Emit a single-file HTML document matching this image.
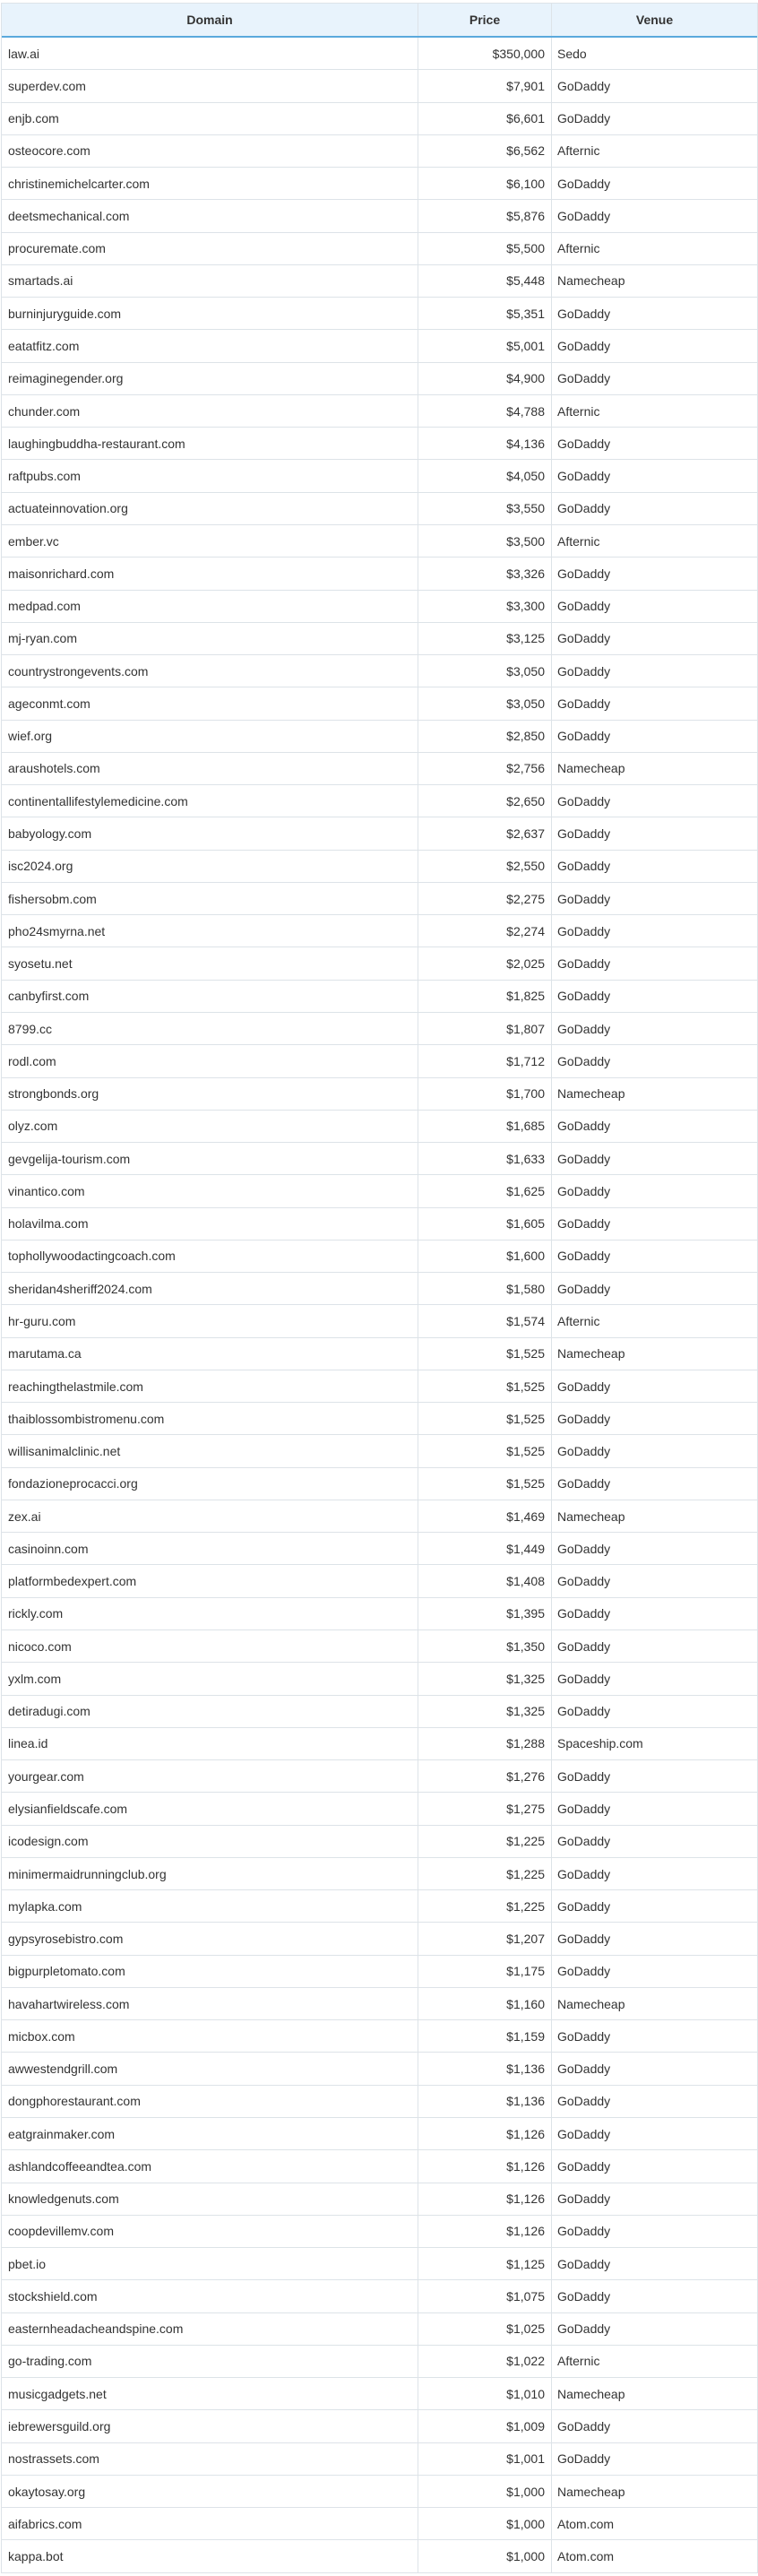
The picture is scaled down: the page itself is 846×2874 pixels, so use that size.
<!DOCTYPE html>
<html><head><meta charset="utf-8"><style>
html,body{margin:0;padding:0;background:#fff;width:846px;height:2874px;overflow:hidden}
.t{position:absolute;left:1px;top:3px;width:843px;border:1px solid #dde3e8;border-bottom:none;font-family:"Liberation Sans",sans-serif;font-size:14px;color:#333}
.h{display:flex;height:36px;background:#e8f3fc;border-bottom:2px solid #5aa9dd;font-weight:bold;color:#333}
.h div{display:flex;align-items:center;justify-content:center}
.r{display:flex;height:35.27px;border-bottom:1px solid #dde3e8}
.c1{width:465px;border-right:1px solid #dde3e8;display:flex;align-items:center;padding-left:7px;box-sizing:border-box}
.c2{width:149px;border-right:1px solid #dde3e8;display:flex;align-items:center;justify-content:flex-end;padding-right:7px;box-sizing:border-box}
.c3{flex:1;display:flex;align-items:center;padding-left:6px;box-sizing:border-box}
.h .c1,.h .c2{justify-content:center;padding:0}
.h .c3{justify-content:center;padding:0}
</style></head><body><div class="t">
<div class="h"><div class="c1">Domain</div><div class="c2">Price</div><div class="c3">Venue</div></div>
<div id="b"></div>
</div>
<script>
var d=`law.ai|$350,000|Sedo
superdev.com|$7,901|GoDaddy
enjb.com|$6,601|GoDaddy
osteocore.com|$6,562|Afternic
christinemichelcarter.com|$6,100|GoDaddy
deetsmechanical.com|$5,876|GoDaddy
procuremate.com|$5,500|Afternic
smartads.ai|$5,448|Namecheap
burninjuryguide.com|$5,351|GoDaddy
eatatfitz.com|$5,001|GoDaddy
reimaginegender.org|$4,900|GoDaddy
chunder.com|$4,788|Afternic
laughingbuddha-restaurant.com|$4,136|GoDaddy
raftpubs.com|$4,050|GoDaddy
actuateinnovation.org|$3,550|GoDaddy
ember.vc|$3,500|Afternic
maisonrichard.com|$3,326|GoDaddy
medpad.com|$3,300|GoDaddy
mj-ryan.com|$3,125|GoDaddy
countrystrongevents.com|$3,050|GoDaddy
ageconmt.com|$3,050|GoDaddy
wief.org|$2,850|GoDaddy
araushotels.com|$2,756|Namecheap
continentallifestylemedicine.com|$2,650|GoDaddy
babyology.com|$2,637|GoDaddy
isc2024.org|$2,550|GoDaddy
fishersobm.com|$2,275|GoDaddy
pho24smyrna.net|$2,274|GoDaddy
syosetu.net|$2,025|GoDaddy
canbyfirst.com|$1,825|GoDaddy
8799.cc|$1,807|GoDaddy
rodl.com|$1,712|GoDaddy
strongbonds.org|$1,700|Namecheap
olyz.com|$1,685|GoDaddy
gevgelija-tourism.com|$1,633|GoDaddy
vinantico.com|$1,625|GoDaddy
holavilma.com|$1,605|GoDaddy
tophollywoodactingcoach.com|$1,600|GoDaddy
sheridan4sheriff2024.com|$1,580|GoDaddy
hr-guru.com|$1,574|Afternic
marutama.ca|$1,525|Namecheap
reachingthelastmile.com|$1,525|GoDaddy
thaiblossombistromenu.com|$1,525|GoDaddy
willisanimalclinic.net|$1,525|GoDaddy
fondazioneprocacci.org|$1,525|GoDaddy
zex.ai|$1,469|Namecheap
casinoinn.com|$1,449|GoDaddy
platformbedexpert.com|$1,408|GoDaddy
rickly.com|$1,395|GoDaddy
nicoco.com|$1,350|GoDaddy
yxlm.com|$1,325|GoDaddy
detiradugi.com|$1,325|GoDaddy
linea.id|$1,288|Spaceship.com
yourgear.com|$1,276|GoDaddy
elysianfieldscafe.com|$1,275|GoDaddy
icodesign.com|$1,225|GoDaddy
minimermaidrunningclub.org|$1,225|GoDaddy
mylapka.com|$1,225|GoDaddy
gypsyrosebistro.com|$1,207|GoDaddy
bigpurpletomato.com|$1,175|GoDaddy
havahartwireless.com|$1,160|Namecheap
micbox.com|$1,159|GoDaddy
awwestendgrill.com|$1,136|GoDaddy
dongphorestaurant.com|$1,136|GoDaddy
eatgrainmaker.com|$1,126|GoDaddy
ashlandcoffeeandtea.com|$1,126|GoDaddy
knowledgenuts.com|$1,126|GoDaddy
coopdevillemv.com|$1,126|GoDaddy
pbet.io|$1,125|GoDaddy
stockshield.com|$1,075|GoDaddy
easternheadacheandspine.com|$1,025|GoDaddy
go-trading.com|$1,022|Afternic
musicgadgets.net|$1,010|Namecheap
iebrewersguild.org|$1,009|GoDaddy
nostrassets.com|$1,001|GoDaddy
okaytosay.org|$1,000|Namecheap
aifabrics.com|$1,000|Atom.com
kappa.bot|$1,000|Atom.com`;
</script>
<noscript></noscript>
<style>#b:empty{}</style>
<div id="x"></div>
<script>
var h='';d.split('\n').forEach(function(l){var p=l.split('|');h+='<div class="r"><div class="c1">'+p[0]+'</div><div class="c2">'+p[1]+'</div><div class="c3">'+p[2]+'</div></div>';});document.getElementById('b').innerHTML=h;
</script>
</body></html>
